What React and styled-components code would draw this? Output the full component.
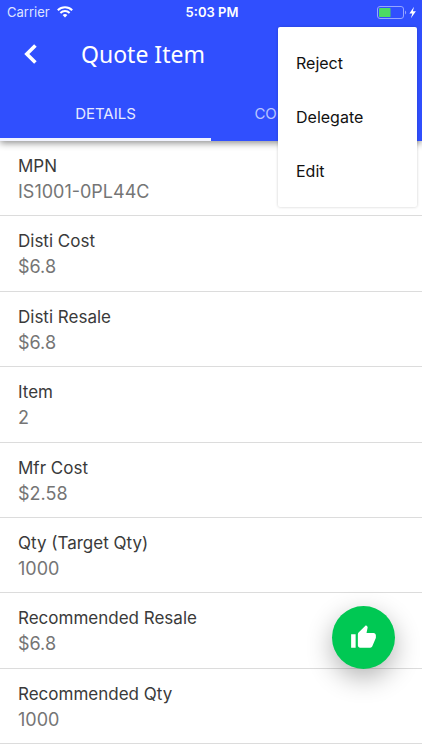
import React, { useState } from 'react';
import styled, { createGlobalStyle } from 'styled-components';
import { MdThumbUp } from 'react-icons/md';

const GlobalStyle = createGlobalStyle`
  * {
    box-sizing: border-box;
  }

  body {
    margin: 0;
    background: #fff;
    font-family: Inter, "Liberation Sans", sans-serif;
  }

  button {
    padding: 0;
    border: 0;
    background: none;
    font-family: inherit;
    cursor: pointer;
  }
`;

const Page = styled.div`
  display: flex;
  flex-direction: column;
  min-height: 100vh;
  padding-bottom: 6px;
`;

const Header = styled.header`
  position: relative;
  background: #304ffe;
  color: #fff;
  box-shadow: 0 2px 7px rgba(0, 0, 0, 0.45);
`;

const StatusBar = styled.div`
  display: grid;
  grid-template-columns: 1fr auto 1fr;
  align-items: center;
  height: 24px;
  padding: 0 5px 0 7px;
  font-size: 13px;
`;

const Carrier = styled.span`
  display: flex;
  align-items: center;
  gap: 7px;
  color: #dfe4ff;
`;

const Clock = styled.span`
  font-weight: 600;
`;

const Power = styled.span`
  display: flex;
  justify-content: flex-end;
`;

const TitleBar = styled.div`
  display: flex;
  align-items: center;
  gap: 37px;
  height: 60px;
  padding-left: 17px;
`;

const BackButton = styled.button`
  display: flex;
  align-items: center;
  justify-content: center;
  width: 27px;
  height: 36px;
  color: #fff;
`;

const Title = styled.h1`
  margin: 0;
  font-family: "Noto Sans", sans-serif;
  font-size: 23px;
  font-weight: 400;
`;

const Tabs = styled.div`
  display: flex;
`;

const Tab = styled.button`
  flex: 1;
  height: 57px;
  padding-top: 4px;
  border-bottom: 3px solid ${(props) => (props.$active ? '#f1f3ff' : 'transparent')};
  color: ${(props) => (props.$active ? '#e6eaff' : '#b9c4ff')};
  font-size: 15px;
`;

const Menu = styled.div`
  position: absolute;
  top: 27px;
  right: 5px;
  z-index: 2;
  width: 139px;
  padding: 9px 0;
  border-radius: 2px;
  background: #fff;
  box-shadow: 0 0 3px rgba(0, 0, 0, 0.2);
`;

const MenuItem = styled.button`
  display: block;
  width: 100%;
  height: 54px;
  padding: 0 18px;
  color: #111;
  font-size: 16px;
  text-align: left;
`;

const List = styled.dl`
  display: flex;
  flex: 1;
  flex-direction: column;
  margin: 0;
`;

const Row = styled.div`
  flex: 1;
  padding: 12px 18px 10px;
  border-bottom: 1px solid #dcdcdc;
  line-height: 26px;
`;

const Label = styled.dt`
  color: #3a3a3a;
  font-size: 17px;
`;

const Value = styled.dd`
  margin: 0;
  color: #757575;
  font-size: 18px;
`;

const ApproveButton = styled.button`
  position: fixed;
  right: 27px;
  bottom: 81px;
  display: flex;
  align-items: center;
  justify-content: center;
  width: 63px;
  height: 63px;
  border-radius: 50%;
  background: #00c853;
  color: #fff;
  box-shadow: 0 9px 26px rgba(0, 0, 0, 0.3);
`;

const details = [
  { label: 'MPN', value: 'IS1001-0PL44C' },
  { label: 'Disti Cost', value: '$6.8' },
  { label: 'Disti Resale', value: '$6.8' },
  { label: 'Item', value: '2' },
  { label: 'Mfr Cost', value: '$2.58' },
  { label: 'Qty (Target Qty)', value: '1000' },
  { label: 'Recommended Resale', value: '$6.8' },
  { label: 'Recommended Qty', value: '1000' },
];

const tabs = ['DETAILS', 'CONFIGURATION'];
const actions = ['Reject', 'Delegate', 'Edit'];

function WifiIcon() {
  return (
    <svg width="16" height="12" viewBox="0 0 16 12" fill="none" stroke="#fff" strokeWidth="2">
      <path d="M0.8 4.2a10.2 10.2 0 0 1 14.4 0" />
      <path d="M3.4 7a6.5 6.5 0 0 1 9.2 0" />
      <path d="M8 11.6 5.6 9.1a3.4 3.4 0 0 1 4.8 0z" fill="#fff" stroke="none" />
    </svg>
  );
}

function BatteryIcon() {
  return (
    <svg width="40" height="13" viewBox="0 0 40 13">
      <rect x="0.5" y="0.5" width="26" height="12" rx="2.5" fill="none" stroke="#96a6ff" />
      <rect x="2" y="2" width="11.5" height="9" rx="0.5" fill="#4cd964" />
      <path d="M28 4.5a2.4 2.4 0 0 1 0 4z" fill="#96a6ff" />
      <path d="M37 0.8 32.4 7.4h2.9l-1.4 4.8 5-7h-3z" fill="#fff" />
    </svg>
  );
}

function BackIcon() {
  return (
    <svg width="13" height="20" viewBox="0 0 13 20" fill="none" stroke="#fff" strokeWidth="3.6">
      <path d="M11.4 1.4 2.8 10l8.6 8.6" />
    </svg>
  );
}

function App() {
  const [activeTab, setActiveTab] = useState('DETAILS');

  return (
    <Page>
      <GlobalStyle />
      <Header>
        <StatusBar>
          <Carrier>
            Carrier
            <WifiIcon />
          </Carrier>
          <Clock>5:03 PM</Clock>
          <Power>
            <BatteryIcon />
          </Power>
        </StatusBar>
        <TitleBar>
          <BackButton aria-label="Back">
            <BackIcon />
          </BackButton>
          <Title>Quote Item</Title>
        </TitleBar>
        <Tabs role="tablist">
          {tabs.map((tab) => (
            <Tab
              key={tab}
              role="tab"
              aria-selected={tab === activeTab}
              $active={tab === activeTab}
              onClick={() => setActiveTab(tab)}
            >
              {tab}
            </Tab>
          ))}
        </Tabs>
        <Menu role="menu">
          {actions.map((action) => (
            <MenuItem key={action} role="menuitem">
              {action}
            </MenuItem>
          ))}
        </Menu>
      </Header>

      <List>
        {details.map((item) => (
          <Row key={item.label}>
            <Label>{item.label}</Label>
            <Value>{item.value}</Value>
          </Row>
        ))}
      </List>

      <ApproveButton aria-label="Approve">
        <MdThumbUp size={27} />
      </ApproveButton>
    </Page>
  );
}

export default App;
